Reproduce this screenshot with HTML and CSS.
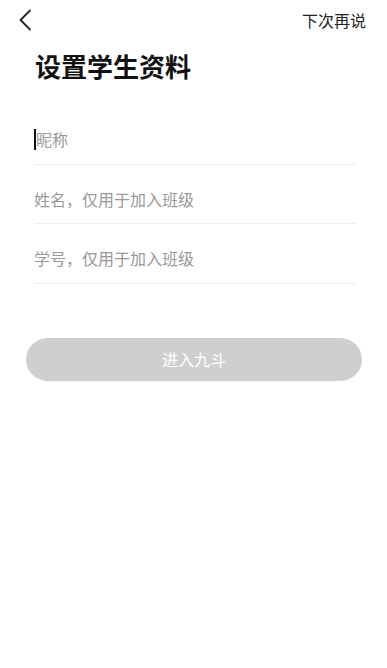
FILE: index.html
```html
<!DOCTYPE html>
<html lang="zh">
<head>
<meta charset="utf-8">
<link rel="stylesheet" href="styles.css">
</head>
<body>
<div class="page">
  <header class="topbar">
    <svg class="back" width="14" height="22" viewBox="0 0 14 22"><path d="M12 1.5 L2.5 11 L12 20.5" fill="none" stroke="#222" stroke-width="1.8" stroke-linecap="round" stroke-linejoin="round"/></svg>
    <span class="skip">下次再说</span>
  </header>
  <h1 class="title">设置学生资料</h1>
  <div class="form">
    <div class="field"><span class="cursor"></span><span class="ph">昵称</span></div>
    <div class="field"><span class="ph">姓名，仅用于加入班级</span></div>
    <div class="field"><span class="ph">学号，仅用于加入班级</span></div>
  </div>
  <div class="btn">进入九斗</div>
</div>
</body>
</html>
```
FILE: styles.css
```css
html, body { margin: 0; padding: 0; background: #fff; }
body { font-family: "Noto Sans CJK SC", "Noto Sans", sans-serif; color: #111; }
.page { width: 387px; height: 668px; }
.topbar { display: flex; justify-content: space-between; align-items: center; height: 40px; padding: 0 21px 0 18px; }
.back { display: block; }
.skip { font-size: 16px; color: #222; margin-top: -1px; }
.title { margin: 8px 0 0 35px; font-size: 26px; font-weight: 700; line-height: 36px; color: #111; }
.form { margin: 21px 31px 0 34px; }
.field { height: 48.5px; padding-top: 10px; border-bottom: 1px solid #ededed; display: flex; align-items: center; }
.ph { font-size: 16px; color: #999; line-height: 20px; }
.cursor { width: 2px; height: 21px; background: #111; }
.btn { margin: 54px 25px 0 26px; height: 43px; border-radius: 22px; background: #cfcfcf; color: #fff; font-size: 16px; display: flex; align-items: center; justify-content: center; }
```
